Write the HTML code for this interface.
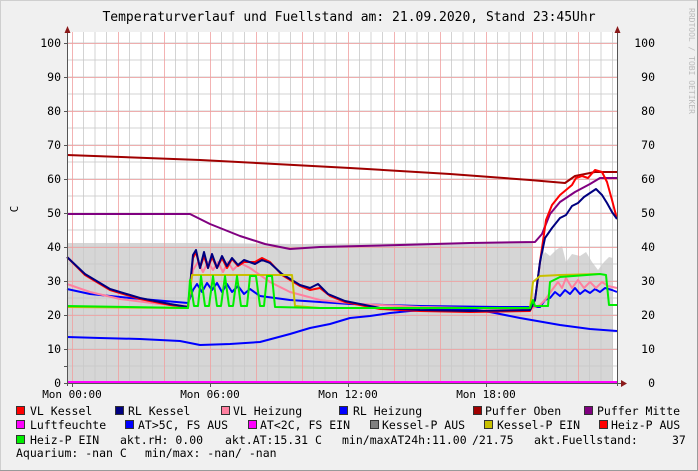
<!DOCTYPE html>
<html><head><meta charset="utf-8"><style>
html,body{margin:0;padding:0;background:#f0f0f0;}
svg{display:block}
text{font-family:"DejaVu Sans Mono","Liberation Mono",monospace;white-space:pre;}
</style></head><body>
<svg width="698" height="471" viewBox="0 0 698 471" xmlns="http://www.w3.org/2000/svg">
<rect x="0" y="0" width="698" height="471" fill="#f0f0f0"/>
<rect x="0.5" y="0.5" width="697" height="470" fill="none" stroke="#cfcfcf"/>
<path d="M0 470.5H698M697.5 0V471" stroke="#9a9a9a"/>
<rect x="67" y="32" width="550" height="351" fill="#fff"/>
<polygon fill="#d6d6d6" points="67,383 67,243 200,243 300,244 400,243 532,242 534,298 540,262 545,252 550,256 556,250 562,246 566,262 572,254 580,256 586,252 592,262 598,270 604,262 609,257 613,258 613,383"/>
<g stroke-width="1">
<path stroke="#c8c8c8" stroke-opacity="0.8" d="M83.5 32V383M95 32V383M106.5 32V383M129.5 32V383M141 32V383M152.5 32V383M175.5 32V383M187 32V383M198.5 32V383M221.5 32V383M233 32V383M244.5 32V383M267.5 32V383M279 32V383M290.5 32V383M313.5 32V383M325 32V383M336.5 32V383M359.5 32V383M371 32V383M382.5 32V383M405.5 32V383M417 32V383M428.5 32V383M451.5 32V383M463 32V383M474.5 32V383M497.5 32V383M509 32V383M520.5 32V383M543.5 32V383M555 32V383M566.5 32V383M589.5 32V383M601 32V383M612.5 32V383"/>
<path stroke="#c8c8c8" stroke-opacity="0.8" d="M67 366H617M67 349H617M67 332H617M67 315H617M67 298H617M67 281H617M67 264H617M67 247H617M67 230H617M67 213H617M67 196H617M67 179H617M67 162H617M67 145H617M67 128H617M67 111H617M67 94H617M67 77H617M67 60H617M67 43H617"/>
<path stroke="#f0a0a0" stroke-opacity="0.8" d="M72.5 32V383M118.5 32V383M164.5 32V383M210.5 32V383M256.5 32V383M302.5 32V383M348.5 32V383M394.5 32V383M440.5 32V383M486.5 32V383M532.5 32V383M578.5 32V383"/>
<path stroke="#f0a0a0" stroke-opacity="0.8" d="M67 349.5H617M67 315.5H617M67 281.5H617M67 247.5H617M67 213.5H617M67 179.5H617M67 145.5H617M67 111.5H617M67 77.5H617M67 43.5H617"/>
</g>
<g fill="none" stroke-width="2" stroke-linejoin="round">
<polyline stroke="#a00000" points="67,155 200,160 350,168 450,174 530,180 565,183 575,176 595,172 617,172"/>
<polyline stroke="#800080" points="67,214 190,214 210,224 240,236 265,244 290,249 320,247 400,245 470,243 535,242 542,234 550,214 560,202 575,192 590,184 600,178 617,178"/>
<polyline stroke="#0000ff" points="67,337 100,338 140,339 180,341 200,345 230,344 260,342 290,334 310,328 330,324 350,318 370,316 390,313 410,311 430,310 470,309 490,312 520,318 560,325 590,329 617,331"/>
<polyline stroke="#0000ff" points="67,289 90,294 130,298 188,303 193,290 197,284 202,292 207,283 212,290 217,283 222,292 227,284 232,292 238,286 244,294 250,289 260,296 290,300 350,304 420,306 500,307 540,307 545,300 550,298 555,292 560,296 565,290 570,294 575,288 580,294 585,290 590,293 595,289 600,292 605,288 612,290 617,292"/>
<polyline stroke="#ff80a0" points="67,284 90,292 120,299 160,304 188,306 193,270 198,262 203,272 208,262 213,270 218,262 223,272 228,262 233,270 240,263 250,268 270,282 290,292 320,300 360,304 420,307 470,308 530,309 540,305 545,300 552,290 558,282 562,288 566,278 572,288 578,280 584,288 590,282 596,288 602,282 608,286 617,288"/>
<polyline stroke="#ff0000" points="67,257 85,275 110,290 140,299 170,305 188,307 193,258 196,252 200,268 204,256 208,268 212,257 217,268 222,258 227,268 232,259 238,266 244,262 255,262 262,258 270,262 282,275 300,286 310,290 320,288 330,296 345,302 360,305 380,309 420,311 470,312 530,311 535,300 540,262 546,220 552,205 560,195 566,190 572,185 576,178 582,176 588,178 595,170 602,172 607,182 612,200 617,219"/>
<polyline stroke="#000080" points="67,257 85,274 110,289 140,298 170,304 188,307 193,255 196,250 200,268 204,252 208,268 212,254 217,268 222,256 227,266 232,258 238,265 244,260 255,264 262,260 270,263 282,274 300,285 310,288 318,284 328,294 345,301 360,304 380,308 420,310 470,311 530,310 535,300 540,262 545,238 552,228 560,218 566,215 572,206 578,203 584,197 590,193 596,189 602,195 607,203 612,212 617,219"/>
<polyline stroke="#c8c000" points="67,307 188,308 192,275 260,275 292,275 295,306 320,308 530,308 533,282 540,276 560,275 600,274"/>
<polyline stroke="#00ee00" points="67,306 188,308 190,280 194,306 198,306 201,276 205,306 209,306 213,276 217,306 221,306 225,276 229,306 233,306 237,276 241,306 247,306 250,276 256,276 260,306 264,306 267,276 272,276 275,307 320,308 530,308 533,300 535,306 548,306 550,282 560,277 600,274 606,275 609,305 617,305"/>
<line x1="67" y1="382" x2="617" y2="382" stroke="#ff00ff"/>
</g>
<g stroke="#555" stroke-width="1">
<line x1="67.5" y1="28" x2="67.5" y2="386"/>
<line x1="617.5" y1="28" x2="617.5" y2="386"/>
<line x1="64" y1="383.5" x2="622" y2="383.5"/>
<path d="M64 366.5H67M64 349.5H67M64 315.5H67M64 281.5H67M64 247.5H67M64 213.5H67M64 179.5H67M64 145.5H67M64 111.5H67M64 77.5H67M64 43.5H67"/>
<path d="M72.5 383V387M210.5 383V387M348.5 383V387M486.5 383V387"/>
</g>
<polygon fill="#8b1a1a" points="64.5,33 70.5,33 67.5,26"/>
<polygon fill="#8b1a1a" points="614.5,33 620.5,33 617.5,26"/>
<polygon fill="#8b1a1a" points="621,380 621,387 627,383.5"/>
<text x="349" y="21" font-size="13" text-anchor="middle" fill="#000">Temperaturverlauf und Fuellstand am: 21.09.2020, Stand 23:45Uhr</text>
<text transform="translate(689,8) rotate(90)" font-size="8" fill="#bbb">RRDTOOL / TOBI OETIKER</text>
<text transform="translate(18,209) rotate(-90)" font-size="11" text-anchor="middle" fill="#000">C</text>
<g font-size="11.5" fill="#000" text-anchor="end">
<text x="61" y="47">100</text><text x="61" y="81">90</text><text x="61" y="115">80</text><text x="61" y="149">70</text><text x="61" y="183">60</text><text x="61" y="217">50</text><text x="61" y="251">40</text><text x="61" y="285">30</text><text x="61" y="319">20</text><text x="61" y="353">10</text><text x="61" y="387">0</text>
<text x="655" y="47">100</text><text x="655" y="81">90</text><text x="655" y="115">80</text><text x="655" y="149">70</text><text x="655" y="183">60</text><text x="655" y="217">50</text><text x="655" y="251">40</text><text x="655" y="285">30</text><text x="655" y="319">20</text><text x="655" y="353">10</text><text x="655" y="387">0</text>
</g>
<g font-size="11" fill="#000" text-anchor="middle">
<text x="72" y="398">Mon 00:00</text><text x="210" y="398">Mon 06:00</text><text x="348" y="398">Mon 12:00</text><text x="486" y="398">Mon 18:00</text>
</g>
<g stroke="#333" stroke-width="1">
<rect x="16.5" y="406.5" width="8" height="8" fill="#ff0000"/>
<rect x="115.5" y="406.5" width="8" height="8" fill="#000080"/>
<rect x="221.5" y="406.5" width="8" height="8" fill="#ff80a0"/>
<rect x="339.5" y="406.5" width="8" height="8" fill="#0000ff"/>
<rect x="473.5" y="406.5" width="8" height="8" fill="#a00000"/>
<rect x="584.5" y="406.5" width="8" height="8" fill="#800080"/>
<rect x="16.5" y="420.5" width="8" height="8" fill="#ff00ff"/>
<rect x="125.5" y="420.5" width="8" height="8" fill="#0000ff"/>
<rect x="248.5" y="420.5" width="8" height="8" fill="#ff00ff"/>
<rect x="370.5" y="420.5" width="8" height="8" fill="#808080"/>
<rect x="484.5" y="420.5" width="8" height="8" fill="#c8c000"/>
<rect x="599.5" y="420.5" width="8" height="8" fill="#ff0000"/>
<rect x="16.5" y="435.5" width="8" height="8" fill="#00ee00"/>
</g>
<g font-size="11.5" fill="#000">
<text x="30" y="415">VL Kessel</text><text x="128" y="415">RL Kessel</text><text x="233" y="415">VL Heizung</text><text x="353" y="415">RL Heizung</text><text x="485" y="415">Puffer Oben</text><text x="597" y="415">Puffer Mitte</text>
<text x="30" y="429">Luftfeuchte</text><text x="138" y="429">AT&gt;5C, FS AUS</text><text x="260" y="429">AT&lt;2C, FS EIN</text><text x="382" y="429">Kessel-P AUS</text><text x="497" y="429">Kessel-P EIN</text><text x="611" y="429">Heiz-P AUS</text>
<text x="30" y="444">Heiz-P EIN</text><text x="120" y="444">akt.rH: 0.00</text><text x="225" y="444">akt.AT:15.31 C</text><text x="342" y="444">min/maxAT24h:11.00</text><text x="472" y="444">/21.75</text><text x="534" y="444">akt.Fuellstand:</text><text x="672" y="444">37</text>
<text x="16" y="457">Aquarium: -nan C</text><text x="145" y="457">min/max: -nan/ -nan</text>
</g>
</svg>
</body></html>
